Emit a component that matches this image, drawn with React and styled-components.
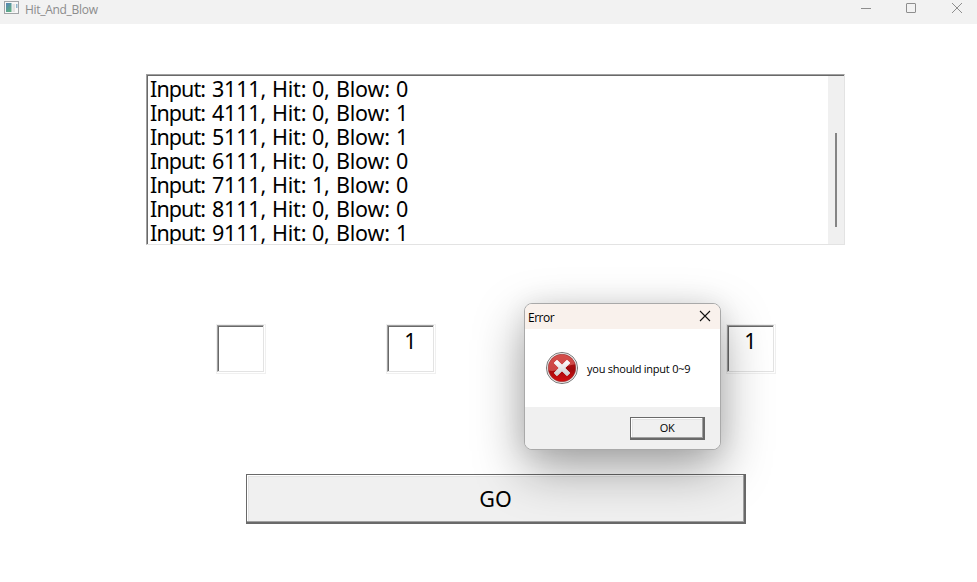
import React from "react";
import styled, { createGlobalStyle, css } from "styled-components";

const GlobalStyle = createGlobalStyle`
  * { box-sizing: border-box; }
  body { margin: 0; background: #fff; overflow: hidden; }
`;

const Window = styled.div`
  position: relative;
  width: 977px;
  height: 582px;
  display: flex;
  flex-direction: column;
  background: #fff;
  color: #000;
  font-family: "Noto Sans", sans-serif;
  overflow: hidden;
`;

const TitleBar = styled.header`
  display: flex;
  align-items: flex-start;
  height: 24px;
  flex: none;
  padding-left: 4px;
  background: #f2f2f2;
`;

const AppIcon = styled.svg`
  display: block;
  margin-top: 1px;
`;

const Title = styled.span`
  flex: 1;
  margin-left: 6px;
  font: 12px/19px "Open Sans", sans-serif;
  letter-spacing: -0.3px;
  color: #8c8c8c;
`;

const Caption = styled.svg`
  display: block;
  fill: none;
  stroke: #8e8e8e;
`;

const Body = styled.main`
  display: flex;
  flex-direction: column;
  padding-top: 50px;
`;

const LogBox = styled.section`
  display: flex;
  width: 699px;
  height: 171px;
  margin-left: 146px;
  border: 1px solid;
  border-color: #a0a0a0 #e3e3e3 #e3e3e3 #a0a0a0;
`;

const LogInner = styled.div`
  display: flex;
  flex: 1;
  border-top: 1px solid #696969;
  border-left: 1px solid #696969;
  overflow: hidden;
`;

const Lines = styled.div`
  flex: 1;
  padding: 1px 0 0 2px;
`;

const Line = styled.div`
  display: grid;
  grid-template-columns: 62px 60px 40px 24px 60px 20px;
  height: 24px;
  font-size: 21.5px;
  line-height: 23px;
  letter-spacing: -0.2px;
  white-space: nowrap;
`;

const Label = styled.span`
  letter-spacing: -0.9px;
`;

const ScrollTrack = styled.div`
  width: 16px;
  padding: 57px 0 0 7px;
  background: #f0f0f0;
`;

const ScrollThumb = styled.div`
  width: 2px;
  height: 94px;
  background: #858585;
`;

const Digits = styled.div`
  display: flex;
  gap: 120px;
  margin: 79px 0 0 216px;
`;

const DigitFrame = styled.div`
  width: 50px;
  height: 50px;
  padding: 0 1px 1px 0;
  border: 1px solid #f0f0f0;
`;

const DigitField = styled.div`
  height: 47px;
  border: 1px solid;
  border-color: #a0a0a0 #e3e3e3 #e3e3e3 #a0a0a0;
  box-shadow: inset 1px 1px #696969;
  font-size: 21.5px;
  line-height: 29px;
  text-align: center;
`;

const PushButton = styled.button`
  display: flex;
  align-items: center;
  justify-content: center;
  margin: 0;
  padding: 0;
  border: solid #696969;
  border-width: 1px 2px 2px 1px;
  border-radius: 0;
  background: #f0f0f0;
  box-shadow: inset -1px -1px #a0a0a0, inset 1px 1px #fff, inset 2px 2px #e3e3e3;
  color: #000;
  font-family: "Noto Sans", sans-serif;
  ${(p) =>
    p.$large
      ? css`
          width: 500px;
          height: 50px;
          margin: 100px 0 0 246px;
          font-size: 21.5px;
          line-height: 24px;
        `
      : css`
          width: 75px;
          height: 23px;
          font: 11px/14px "Open Sans", sans-serif;
          letter-spacing: -0.5px;
        `}
`;

const Dialog = styled.div`
  position: absolute;
  left: 524px;
  top: 303px;
  width: 197px;
  height: 147px;
  display: flex;
  flex-direction: column;
  border: 1px solid #a9a9a9;
  border-radius: 8px;
  background: #fff;
  background-clip: padding-box;
  box-shadow: 0 19px 50px rgba(0, 0, 0, 0.37), 0 0 24px rgba(0, 0, 0, 0.07);
  font-family: "Open Sans", sans-serif;
`;

const DialogTitle = styled.div`
  display: flex;
  justify-content: space-between;
  height: 25px;
  padding: 0 9px 0 3px;
  border-radius: 7px 7px 0 0;
  background: #f9f1ec;
  font-size: 12px;
  line-height: 27px;
  letter-spacing: -0.5px;
`;

const CloseIcon = styled.svg`
  display: block;
  margin-top: 6px;
`;

const DialogBody = styled.div`
  display: flex;
  align-items: flex-start;
  height: 78px;
  padding: 22px 0 0 20px;
`;

const Message = styled.span`
  margin: 9px 0 0 8px;
  font-size: 11px;
  line-height: 18px;
  letter-spacing: -0.24px;
  white-space: nowrap;
`;

const DialogFooter = styled.div`
  display: flex;
  justify-content: flex-end;
  flex: 1;
  padding: 10px 15px 0 0;
  border-radius: 0 0 7px 7px;
  background: #f0f0f0;
`;

const entries = [
  ["3111", 0, 0],
  ["4111", 0, 1],
  ["5111", 0, 1],
  ["6111", 0, 0],
  ["7111", 1, 0],
  ["8111", 0, 0],
  ["9111", 0, 1],
];

const digits = ["", "1", "", "1"];

export default function App() {
  return (
    <>
      <GlobalStyle />
      <Window>
        <TitleBar>
          <AppIcon width="15" height="14" viewBox="0 0 15 14">
            <defs>
              <linearGradient id="pane" x1="0" y1="0" x2="0.6" y2="1">
                <stop offset="0" stopColor="#5684b8" />
                <stop offset="1" stopColor="#5fae83" />
              </linearGradient>
            </defs>
            <rect x="0.5" y="0.5" width="14" height="12" fill="#f7f7f7" stroke="#a2a5a8" />
            <rect x="2" y="2" width="5.5" height="9" fill="url(#pane)" />
            <rect x="8.5" y="3" width="2.5" height="8" fill="#e2e2e2" />
            <rect x="12" y="3" width="1.5" height="4" fill="#8fb6cc" />
          </AppIcon>
          <Title>Hit_And_Blow</Title>
          <Caption width="137" height="24">
            <path d="M21 8.5h10" />
            <rect x="66.5" y="3.5" width="9" height="9" rx="0.5" />
            <path d="M112 3l10 10M122 3l-10 10" />
          </Caption>
        </TitleBar>
        <Body>
          <LogBox>
            <LogInner>
              <Lines>
                {entries.map(([guess, hit, blow]) => (
                  <Line key={guess}>
                    <Label>Input:</Label>
                    <span>{guess},</span>
                    <span>Hit:</span>
                    <span>{hit},</span>
                    <span>Blow:</span>
                    <span>{blow}</span>
                  </Line>
                ))}
              </Lines>
              <ScrollTrack>
                <ScrollThumb />
              </ScrollTrack>
            </LogInner>
          </LogBox>
          <Digits>
            {digits.map((d, i) => (
              <DigitFrame key={i}>
                <DigitField>{d}</DigitField>
              </DigitFrame>
            ))}
          </Digits>
          <PushButton $large>GO</PushButton>
        </Body>
        <Dialog>
          <DialogTitle>
            <span>Error</span>
            <CloseIcon width="12" height="12" fill="none" stroke="#111" strokeWidth="1.1">
              <path d="M1 1l10 10M11 1L1 11" />
            </CloseIcon>
          </DialogTitle>
          <DialogBody>
            <svg width="34" height="34" viewBox="0 0 34 34">
              <defs>
                <linearGradient id="red" x1="0" y1="0" x2="0" y2="1">
                  <stop offset="0" stopColor="#b81c1c" />
                  <stop offset="0.55" stopColor="#a00a0c" />
                  <stop offset="1" stopColor="#d61010" />
                </linearGradient>
                <linearGradient id="cross" x1="0" y1="0" x2="0" y2="1">
                  <stop offset="0" stopColor="#ffffff" />
                  <stop offset="1" stopColor="#cfcfcf" />
                </linearGradient>
              </defs>
              <circle cx="17" cy="17" r="15.6" fill="#f0f0f0" stroke="#7d7d7d" />
              <circle cx="17" cy="17" r="13.8" fill="url(#red)" stroke="#8f3a3a" strokeWidth="0.6" />
              <path
                d="M3.6 19.5A13.6 13.6 0 0 1 30 13.2C25 14 20 15.5 15 18C11 20 7 20.5 3.6 19.5Z"
                fill="#e8706a"
                fillOpacity="0.6"
              />
              <path
                d="M12 9.2l5 5 5-5 2.8 2.8-5 5 5 5-2.8 2.8-5-5-5 5L9.2 22l5-5-5-5z"
                fill="url(#cross)"
                stroke="url(#cross)"
                strokeLinejoin="round"
              />
            </svg>
            <Message>you should input 0~9</Message>
          </DialogBody>
          <DialogFooter>
            <PushButton>OK</PushButton>
          </DialogFooter>
        </Dialog>
      </Window>
    </>
  );
}
